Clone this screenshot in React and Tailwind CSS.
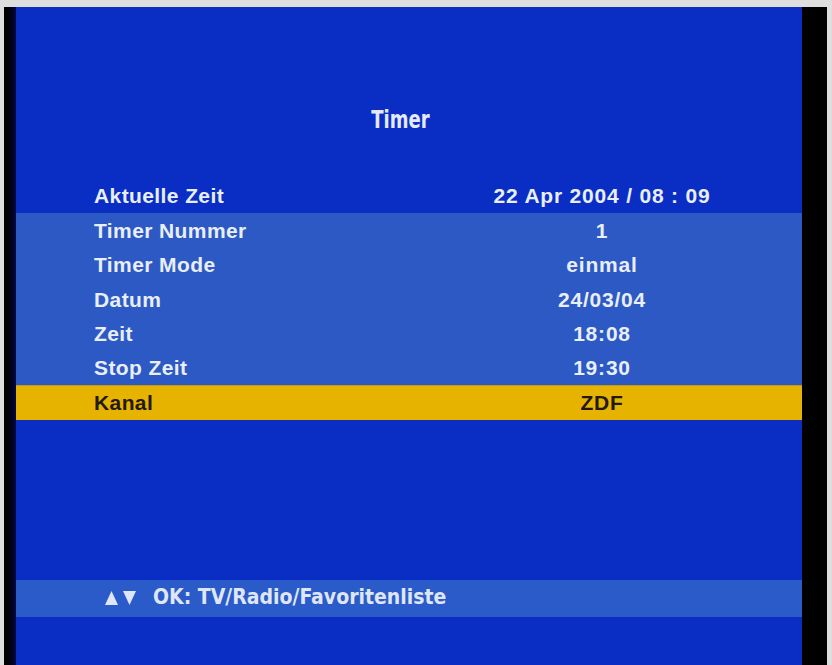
import React from 'react';

const ROWS = [
  { label: 'Timer Nummer', value: '1' },
  { label: 'Timer Mode', value: 'einmal' },
  { label: 'Datum', value: '24/03/04' },
  { label: 'Zeit', value: '18:08' },
  { label: 'Stop Zeit', value: '19:30' },
];

const osd = { fontFamily: '"Liberation Sans", Arial, sans-serif' };
const narrow = { fontFamily: '"Liberation Sans Narrow", "DejaVu Sans Condensed", "Liberation Sans", sans-serif' };

const Row = ({ label, value, className = '', textClass = 'text-[#e9eefb]' }) => (
  <div className={`flex items-center h-[34.4px] pl-[78px] ${className}`}>
    <div className={`w-[320px] text-[21px] font-bold tracking-[0.4px] ${textClass}`}>{label}</div>
    <div className={`w-[376px] text-center text-[21px] font-bold tracking-[0.8px] ${textClass}`}>{value}</div>
  </div>
);

const Tri = ({ down }) => (
  <svg width="13" height="16" viewBox="0 0 13 16" className="fill-[#dfe6f8]">
    {down ? <path d="M0 1h13L6.5 15z" /> : <path d="M6.5 1L13 15H0z" />}
  </svg>
);

export default function App() {
  return (
    <div className="w-[832px] h-[665px] bg-[#dedede] pt-[7px] overflow-hidden" style={osd}>
      <div className="flex h-[658px]">
        <div className="w-[4px]" />
        <div className="w-[12px] bg-gradient-to-r from-black to-[#050a40]" />

        <div className="w-[786px] bg-[#0a2ec4] flex flex-col">
          <div className="mt-[96px] h-[34px] flex justify-center pr-[18px]">
            <span
              className="leading-[34px] text-[25px] font-bold text-[#e4eafb] scale-x-[0.8]"
              style={narrow}
            >
              Timer
            </span>
          </div>

          <div className="mt-[42px]">
            <Row label="Aktuelle Zeit" value="22 Apr 2004 / 08 : 09" />
            <div className="bg-[#2c59c4]">
              {ROWS.map((r) => (
                <Row key={r.label} label={r.label} value={r.value} />
              ))}
            </div>
            <Row label="Kanal" value="ZDF" className="bg-[#e6b400] border-t border-[#c49a10]" textClass="text-[#24180a]" />
          </div>

          <div className="mt-[160px] h-[37px] bg-[#2b5bc8] flex items-center pl-[89px] gap-[5px]">
            <Tri />
            <Tri down />
            <span className="ml-[12px] text-[21px] font-bold text-[#dfe6f8]" style={narrow}>
              OK: TV/Radio/Favoritenliste
            </span>
          </div>
        </div>

        <div className="w-[25px] bg-black" />
        <div className="w-[5px] bg-[#dedede]" />
      </div>
    </div>
  );
}
